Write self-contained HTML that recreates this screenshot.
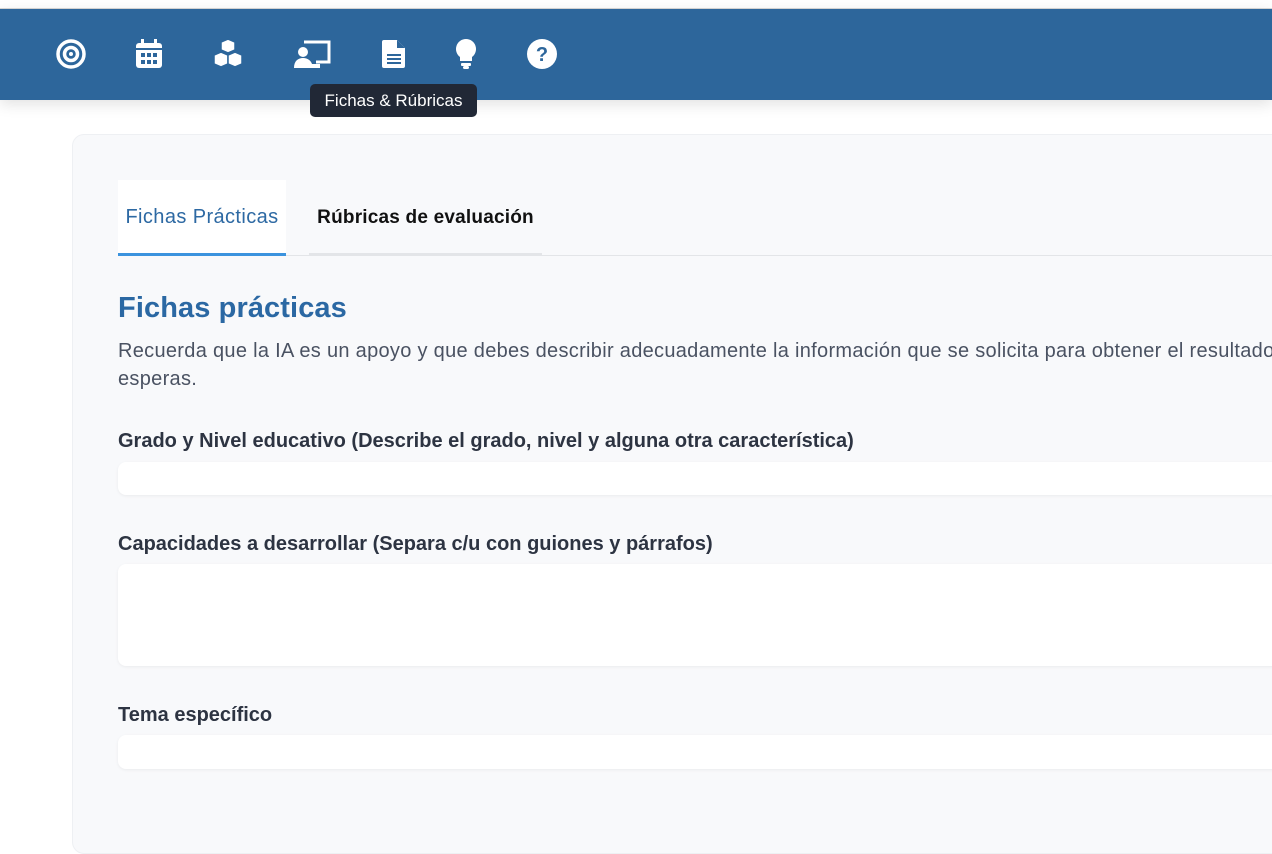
<!DOCTYPE html>
<html><head><meta charset="utf-8"><style>
*{box-sizing:border-box;margin:0;padding:0}
body{width:1272px;height:800px;overflow:hidden;background:#fff;font-family:"Liberation Sans",sans-serif;position:relative}
.top{position:absolute;left:0;top:0;width:1272px;height:9px;background:#fff;border-bottom:1px solid #d8d8d8}
.bar{position:absolute;left:0;top:9px;width:1272px;height:91px;background:#2d669b;box-shadow:0 4px 14px rgba(0,0,0,.12)}
.ic{position:absolute;top:38px;width:32px;height:32px}
.tip{position:absolute;left:310px;top:84px;width:167px;height:33px;background:#212836;border-radius:5px;color:#fff;font-size:17px;line-height:33px;text-align:center}
.card{position:absolute;left:72px;top:134px;width:1250px;height:720px;background:#f8f9fb;border-radius:12px;border:1px solid #eef0f3}
.tab{position:absolute;font-size:20px;letter-spacing:.4px;line-height:75px;top:180px;height:76px}
.t1{left:118px;width:168px;background:#fff;color:#2d69a3;text-align:center;border-bottom:3px solid #3b93de}
.t2{left:309px;width:233px;color:#111;text-align:center;border-bottom:3px solid #e3e5e8;font-weight:bold;font-size:19px;letter-spacing:.2px}
.line{position:absolute;left:118px;top:255px;width:1160px;height:1px;background:#e3e5e8}
h1{position:absolute;left:118px;top:292px;font-size:29px;color:#2b68a3;font-weight:bold;letter-spacing:.1px}
p{position:absolute;left:118px;top:337px;width:1200px;font-size:20px;letter-spacing:.3px;line-height:28px;color:#4a5262}
.lab{position:absolute;left:118px;font-size:20px;letter-spacing:0;color:#2d3442;font-weight:bold}
.in{position:absolute;left:118px;width:1200px;background:#fff;border-radius:8px;box-shadow:0 1px 3px rgba(0,0,0,.06)}
</style></head><body>
<div class="top"></div>
<div class="bar"></div>
<svg class="ic" style="left:55px" viewBox="0 0 32 32"><circle cx="16" cy="16" r="13" fill="none" stroke="#fff" stroke-width="3.5"/><circle cx="16" cy="16" r="6.5" fill="none" stroke="#fff" stroke-width="3.5"/><circle cx="16" cy="16" r="2" fill="#fff"/></svg>
<svg class="ic" style="left:133px" viewBox="0 0 32 32"><rect x="3" y="5" width="26" height="25" rx="3" fill="#fff"/><rect x="8" y="1" width="3" height="6" fill="#fff"/><rect x="21" y="1" width="3" height="6" fill="#fff"/><rect x="3" y="10" width="26" height="2" fill="#2d669b"/><g fill="#2d669b"><rect x="8" y="15" width="4" height="4"/><rect x="14" y="15" width="4" height="4"/><rect x="20" y="15" width="4" height="4"/><rect x="8" y="22" width="4" height="4"/><rect x="14" y="22" width="4" height="4"/><rect x="20" y="22" width="4" height="4"/></g></svg>
<svg class="ic" style="left:211px;width:34px;height:34px;top:37px" viewBox="0 0 34 34"><g fill="#fff" stroke="#2d669b" stroke-width="1.5"><path d="M17 2l7 3v8l-7 3-7-3V5z"/><path d="M10 15l7 3v9l-7 3-7-3v-9z"/><path d="M24 15l7 3v9l-7 3-7-3v-9z"/></g></svg>
<svg class="ic" style="left:294px;width:38px" viewBox="0 0 38 32"><path d="M10 4h25v20H22" fill="none" stroke="#fff" stroke-width="3"/><circle cx="9" cy="14" r="5" fill="#fff"/><path d="M0 30c0-7 4-10 9-10s8 3 9 6h8v4z" fill="#fff"/></svg>
<svg class="ic" style="left:378px" viewBox="0 0 32 32"><path d="M6 2h13l8 8v18a2 2 0 0 1-2 2H6a2 2 0 0 1-2-2V4a2 2 0 0 1 2-2z" fill="#fff"/><path d="M19 2v8h8" fill="#2d669b"/><g fill="#2d669b"><rect x="9" y="16" width="14" height="2"/><rect x="9" y="20" width="14" height="2"/><rect x="9" y="24" width="14" height="2"/></g></svg>
<svg class="ic" style="left:450px" viewBox="0 0 32 32"><path d="M16 1a10 10 0 0 0-6 18v4h12v-4A10 10 0 0 0 16 1z" fill="#fff"/><rect x="11" y="25" width="10" height="3" rx="1" fill="#fff"/><rect x="13" y="28" width="6" height="3" rx="1.5" fill="#fff"/></svg>
<svg class="ic" style="left:526px" viewBox="0 0 32 32"><circle cx="16" cy="16" r="15" fill="#fff"/><text x="16" y="23" text-anchor="middle" font-family="Liberation Sans" font-weight="bold" font-size="20" fill="#2d669b">?</text></svg>
<div class="tip">Fichas &amp; Rúbricas</div>
<div class="card"></div>
<div class="line"></div>
<div class="tab t1">Fichas Prácticas</div>
<div class="tab t2">Rúbricas de evaluación</div>
<h1>Fichas prácticas</h1>
<p>Recuerda que la IA es un apoyo y que debes describir adecuadamente la información que se solicita para obtener el resultado que esperas.</p>
<div class="lab" style="top:430px">Grado y Nivel educativo (Describe el grado, nivel y alguna otra característica)</div>
<div class="in" style="top:462px;height:33px"></div>
<div class="lab" style="top:533px">Capacidades a desarrollar (Separa c/u con guiones y párrafos)</div>
<div class="in" style="top:564px;height:102px"></div>
<div class="lab" style="top:704px">Tema específico</div>
<div class="in" style="top:735px;height:34px"></div>
</body></html>
